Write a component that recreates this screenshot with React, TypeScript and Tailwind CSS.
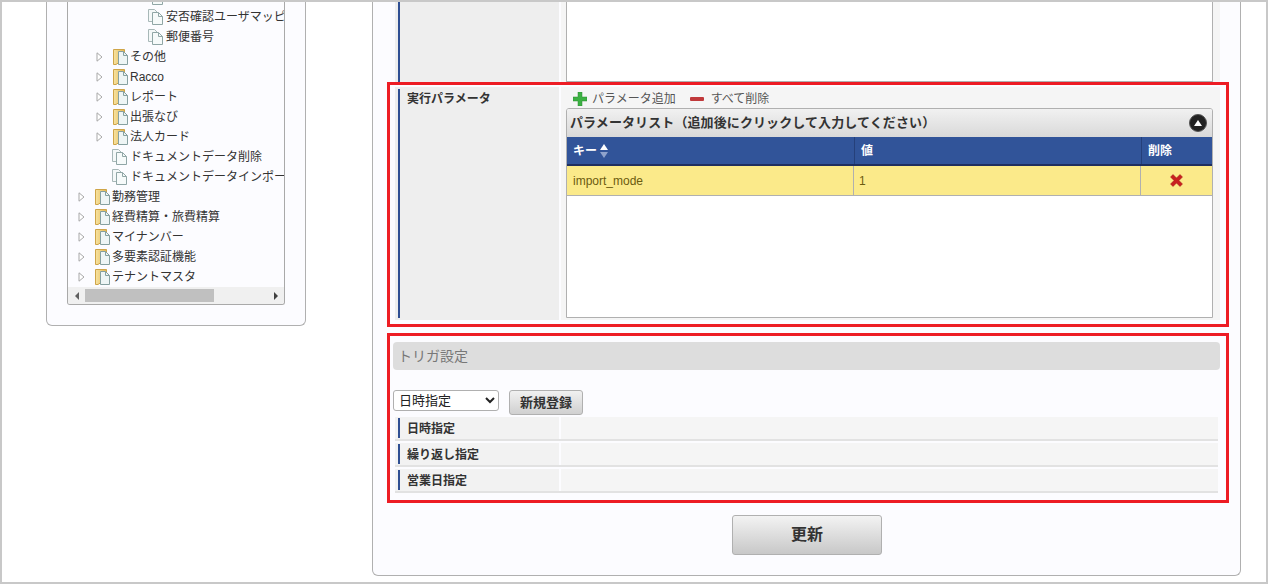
const FONT = "font-['Liberation_Sans','Noto_Sans_CJK_JP',sans-serif]";

const FolderIcon = () => (
  <svg width="15" height="16" viewBox="0 0 15 16" className="shrink-0">
    <defs>
      <linearGradient id="fold" x1="0" y1="0" x2="1" y2="0">
        <stop offset="0" stopColor="#f7e3a2" />
        <stop offset="1" stopColor="#e5b84f" />
      </linearGradient>
    </defs>
    <path d="M.5.5h11v13H6l-3 2H.5z" fill="url(#fold)" stroke="#cfa548" />
    <path d="M5.5 2.5h5l4 4v9h-9z" fill="#eef5f5" stroke="#86a0a0" />
    <path d="M10.5 2.5v4h4" fill="none" stroke="#86a0a0" />
  </svg>
);

const PageIcon = () => (
  <svg width="15" height="16" viewBox="0 0 15 16" className="shrink-0">
    <path d="M.5.5h6l3 3v9h-9z" fill="#f4f8f8" stroke="#a8b8b8" />
    <path d="M4.5 3.5h6l4 4v8h-10z" fill="#f6fafa" stroke="#90a6a6" />
    <path d="M10.5 3.5v4h4" fill="none" stroke="#90a6a6" />
  </svg>
);

const Arrow = () => (
  <svg width="7" height="10" viewBox="0 0 7 10" className="shrink-0">
    <path d="M1 .8 6 5 1 9.2z" fill="#fff" stroke="#a8a8a8" />
  </svg>
);

const treeRows = [
  { label: "", indent: 80, kind: "page" },
  { label: "安否確認ユーザマッピング", indent: 80, kind: "page" },
  { label: "郵便番号", indent: 80, kind: "page" },
  { label: "その他", indent: 28, kind: "folder" },
  { label: "Racco", indent: 28, kind: "folder" },
  { label: "レポート", indent: 28, kind: "folder" },
  { label: "出張なび", indent: 28, kind: "folder" },
  { label: "法人カード", indent: 28, kind: "folder" },
  { label: "ドキュメントデータ削除", indent: 44, kind: "page" },
  { label: "ドキュメントデータインポート", indent: 44, kind: "page" },
  { label: "勤務管理", indent: 10, kind: "folder" },
  { label: "経費精算・旅費精算", indent: 10, kind: "folder" },
  { label: "マイナンバー", indent: 10, kind: "folder" },
  { label: "多要素認証機能", indent: 10, kind: "folder" },
  { label: "テナントマスタ", indent: 10, kind: "folder" },
];

const Tree = () => (
  <div className="ml-5 w-[218px] h-[303px] flex flex-col border-x border-b border-[#a9a9a9] rounded-b-[3px] overflow-hidden">
    <div className="flex-1 overflow-hidden">
      <div className="-mt-[15px]">
        {treeRows.map((row, i) => (
          <div key={i} className="h-5 flex items-center whitespace-nowrap text-xs text-[#333]">
            <span className="shrink-0" style={{ width: row.indent }} />
            {row.kind === "folder" ? (
              <>
                <Arrow />
                <span className="w-[10px] shrink-0" />
                <FolderIcon />
                <span className="ml-[2px]">{row.label}</span>
              </>
            ) : (
              <>
                <PageIcon />
                <span className="ml-[3px]">{row.label}</span>
              </>
            )}
          </div>
        ))}
      </div>
    </div>
    <div className="h-[17px] shrink-0 bg-[#f0f0f0] flex items-center">
      <div className="w-[17px] flex justify-center">
        <span className="w-0 h-0 border-y-[4px] border-y-transparent border-r-[4px] border-r-[#606060]" />
      </div>
      <div className="w-[129px] h-[13px] bg-[#c0c0c0]" />
      <div className="flex-1 flex justify-end pr-[6px]">
        <span className="w-0 h-0 border-y-[4px] border-y-transparent border-l-[4px] border-l-[#404040]" />
      </div>
    </div>
  </div>
);

const TriggerRow = ({ label }: { label: string }) => (
  <div className="flex h-[24px] border-b-2 border-[#e2e2e2] mb-[2px]">
    <div className="w-[164px] bg-[#f2f2f2] flex items-center pl-[3px]">
      <span className="w-[2px] h-5 bg-[#2f4f93]" />
      <span className="ml-[7px] pt-[2px] text-xs font-bold text-[#333]">{label}</span>
    </div>
    <div className="w-[2px] bg-[#fcfcff]" />
    <div className="flex-1 bg-[#f5f5f5]" />
  </div>
);

export default function App() {
  return (
    <div className={`${FONT} w-[1268px] h-[584px] relative overflow-hidden flex items-start bg-white border-2 border-[#c8c8c8] text-[#333]`}>
      <div className="ml-[44px] w-[260px] h-[324px] shrink-0 bg-[#fcfcff] border-x border-b border-[#b0b0b0] rounded-b-[6px]">
        <Tree />
      </div>

      <div className="ml-[66px] w-[869px] h-[574px] shrink-0 bg-[#fcfcff] border-x border-b border-[#b0b0b0] rounded-b-[6px] pl-[22px] flex flex-col">
        {/* 上の行 */}
        <div className="flex h-[83px] shrink-0">
          <div className="w-[164px] bg-[#eeeeee] pl-[3px]">
            <div className="w-[2px] h-full bg-[#2f4f93]" />
          </div>
          <div className="w-[2px]" />
          <div className="w-[659px] bg-[#f5f5f5] pl-[5px] pr-[7px] pb-[3px]">
            <div className="h-full bg-white border-x border-b border-[#b0b0b0]" />
          </div>
        </div>

        {/* 実行パラメータ */}
        <div className="flex h-[233px] mt-[2px] shrink-0">
          <div className="w-[164px] bg-[#eeeeee] pl-[3px] py-[2px] flex">
            <div className="w-[2px] h-full bg-[#2f4f93]" />
            <div className="ml-[7px] mt-[2px] text-xs font-bold text-[#333] leading-4">実行パラメータ</div>
          </div>
          <div className="w-[2px]" />
          <div className="w-[659px] bg-[#f5f5f5] pl-[5px] pr-[7px] pb-[2px] flex flex-col">
            <div className="h-[21px] shrink-0 flex items-center pl-[7px] text-xs text-[#555] pt-[3px]">
              <svg width="14" height="14" viewBox="0 0 14 14" className="shrink-0">
                <path d="M5 0h4v5h5v4H9v5H5V9H0V5h5z" fill="#3cb043" stroke="#2b8f33" strokeWidth=".5" />
              </svg>
              <span className="ml-[5px] mr-[1px]">パラメータ追加</span>
              <span className="ml-[13px] w-[14px] h-1 bg-[#c0393b] rounded-[1px]" />
              <span className="ml-[7px]">すべて削除</span>
            </div>
            <div className="h-[210px] bg-white border border-[#b0b0b0] rounded-t-[3px] overflow-hidden">
              <div className="h-7 flex items-center justify-between pl-[3px] pr-[5px] bg-gradient-to-b from-[#f1f1f1] to-[#d9d9d9] text-[13px] tracking-[0.1px] font-bold text-[#333]">
                <span>パラメータリスト（追加後にクリックして入力してください）</span>
                <span className="w-[18px] h-[18px] rounded-full bg-[#222] border border-[#555] flex items-center justify-center">
                  <span className="w-0 h-0 border-x-[4px] border-x-transparent border-b-[6px] border-b-white" />
                </span>
              </div>
              <div className="h-[29px] flex bg-[#315499] border-b-2 border-[#1f2f5f] text-xs font-bold text-white">
                <div className="w-[288px] flex items-center pl-[6px] border-r border-[#25407a]">
                  キー
                  <span className="flex flex-col gap-[2px] ml-[3px]">
                    <span className="w-0 h-0 border-x-[4px] border-x-transparent border-b-[6px] border-b-white" />
                    <span className="w-0 h-0 border-x-[4px] border-x-transparent border-t-[6px] border-t-[#8fa3cc]" />
                  </span>
                </div>
                <div className="w-[287px] flex items-center pl-[6px] border-r border-[#25407a]">値</div>
                <div className="flex-1 flex items-center pl-[6px]">削除</div>
              </div>
              <div className="h-[30px] flex bg-[#fbea8a] border-b border-[#b0b0b0] text-xs text-[#6b5b10]">
                <div className="w-[287px] flex items-center pl-[6px] border-r border-[#b0b0b0]">import_mode</div>
                <div className="w-[287px] flex items-center pl-[5px] border-r border-[#b0b0b0]">1</div>
                <div className="flex-1 flex items-center justify-center">
                  <svg width="13" height="13" viewBox="0 0 13 13">
                    <path d="M3 .5 6.5 4 10 .5l2.5 2.5L9 6.5l3.5 3.5-2.5 2.5L6.5 9 3 12.5.5 10 4 6.5.5 3z" fill="#c8201f" stroke="#a31a1a" strokeWidth=".5" />
                  </svg>
                </div>
              </div>
            </div>
          </div>
        </div>

        {/* トリガ設定 */}
        <div className="mt-[22px] h-7 w-[827px] -ml-[2px] shrink-0 bg-[#dddddd] rounded-[4px] flex items-center pl-[5px] text-sm text-[#777]">
          トリガ設定
        </div>
        <div className="mt-[20px] h-[27px] -ml-[2px] flex items-start shrink-0">
          <select className="w-[106px] h-[21px] bg-white border border-[#b0b0b0] rounded-[3px] text-[13px] pl-[1px] text-[#222]" defaultValue="日時指定">
            <option>日時指定</option>
          </select>
          <button className="ml-[10px] w-[74px] h-[25px] border border-[#b0b0b0] rounded-[3px] bg-gradient-to-b from-[#f1f1f1] to-[#d0d0d0] text-[13px] font-bold text-[#333]">
            新規登録
          </button>
        </div>
        <div className="w-[823px] shrink-0">
          <TriggerRow label="日時指定" />
          <TriggerRow label="繰り返し指定" />
          <TriggerRow label="営業日指定" />
        </div>

        <button className="mt-[20px] ml-[337px] w-[150px] h-10 shrink-0 border border-[#b0b0b0] rounded-[3px] bg-gradient-to-b from-[#f3f3f3] to-[#c8c8c8] text-base font-bold text-[#333]">
          更新
        </button>
      </div>

      {/* 赤枠の注釈 */}
      <div className="absolute left-[385px] top-[80px] w-[842px] h-[245px] border-[3px] border-[#ed1c24]" />
      <div className="absolute left-[385px] top-[331px] w-[842px] h-[170px] border-[3px] border-[#ed1c24]" />
    </div>
  );
}
